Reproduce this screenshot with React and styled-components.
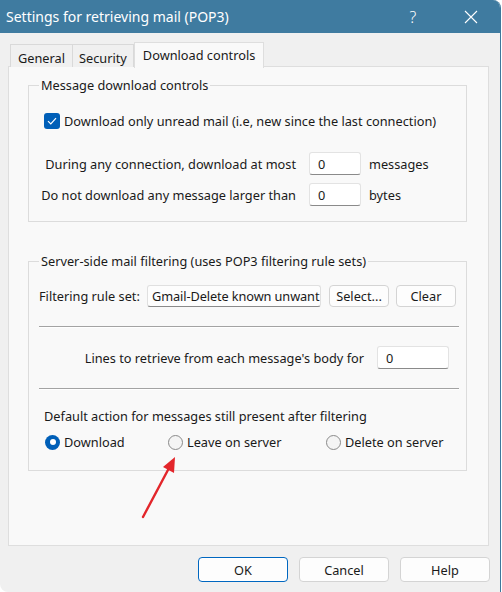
import React from 'react'
import styled, { createGlobalStyle } from 'styled-components'

const GlobalStyle = createGlobalStyle`
  html, body {
    margin: 0;
    padding: 0;
    background: #ffffff;
  }
  body {
    font-family: "Noto Sans", "Liberation Sans", sans-serif;
    font-size: 12.75px;
    color: #1a1a1a;
  }
`

const Window = styled.div`
  position: relative;
  width: 501px;
  height: 592px;
  box-sizing: border-box;
  border-right: 1px solid #3c789c;
  border-radius: 0 8px 0 8px;
  overflow: hidden;
  background: #f0f0f0;
  display: flex;
  flex-direction: column;
`

const TitleBar = styled.div`
  height: 33px;
  flex: none;
  background: #3f7ba0;
  color: #ffffff;
  display: flex;
  align-items: center;
  padding-left: 6px;
`

const Title = styled.span`
  flex: 1;
  font-size: 14px;
`

const TitleButton = styled.span`
  width: 58px;
  height: 33px;
  display: flex;
  align-items: center;
  justify-content: center;
  font-size: 16px;
  font-weight: 300;
`

const Body = styled.div`
  flex: 1;
  padding: 9px 0 0 8px;
  display: flex;
  flex-direction: column;
`

const TabStrip = styled.div`
  display: flex;
  align-items: flex-end;
  padding-left: 2px;
  height: 25px;
  margin-bottom: -1px;
  position: relative;
  z-index: 1;
`

const Tab = styled.div`
  height: ${p => (p.$active ? '26px' : '23px')};
  box-sizing: border-box;
  padding: ${p => (p.$active ? '3px 8px 0' : `4px ${p.$pad || 7}px 0`)};
  border: 1px solid ${p => (p.$active ? '#dedede' : '#d9d9d9')};
  border-bottom: none;
  border-left: ${p => (p.$first || p.$active ? '' : 'none')};
  background: ${p => (p.$active ? '#f9f9f9' : '#f0f0f0')};
  margin-bottom: ${p => (p.$active ? '-1px' : '0')};
  white-space: nowrap;
`

const Panel = styled.div`
  width: 481px;
  height: 480px;
  box-sizing: border-box;
  border: 1px solid #dedede;
  background: #f9f9f9;
  padding: 9px 0 0 19px;
`

const Group = styled.fieldset`
  width: 439px;
  box-sizing: border-box;
  margin: ${p => p.$top || 0}px 0 0;
  padding: 0 0 ${p => p.$bottom || 14}px 10px;
  border: 1px solid #dcdcdc;
  min-width: 0;
`

const Legend = styled.legend`
  padding: 0 2px;
  margin-left: 0;
  line-height: 18px;
`

const CheckRow = styled.label`
  display: flex;
  align-items: center;
  gap: 4px;
  margin: 19px 0 0 5px;
  line-height: 16px;
`

const CheckBox = styled.span`
  width: 16px;
  height: 16px;
  border-radius: 3px;
  background: #005fb8;
  display: flex;
  align-items: center;
  justify-content: center;
  flex: none;
`

const FieldGrid = styled.div`
  display: grid;
  grid-template-columns: 257px 52px auto;
  column-gap: 13px;
  row-gap: 8px;
  align-items: center;
  margin-top: 23px;
`

const FieldLabel = styled.span`
  text-align: right;
  white-space: nowrap;
`

const Unit = styled.span`
  margin-left: -5px;
`

const Input = styled.div`
  width: ${p => p.$width || 52}px;
  height: 23px;
  box-sizing: border-box;
  background: #ffffff;
  border: 1px solid #e3e3e3;
  border-bottom-color: #8a8a8a;
  border-radius: 3px;
  padding-left: 8px;
  display: flex;
  align-items: center;
`

const RuleRow = styled.div`
  display: flex;
  align-items: center;
  margin-top: 15px;
`

const RuleLabel = styled.span`
  width: 108px;
  white-space: nowrap;
`

const RuleField = styled.div`
  width: 174px;
  height: 22px;
  box-sizing: border-box;
  background: #fdfdfd;
  border: 1px solid #e0e0e0;
  border-bottom-color: #8a8a8a;
  border-radius: 3px;
  padding-left: 4px;
  display: flex;
  align-items: center;
  white-space: nowrap;
  letter-spacing: -0.1px;
`

const SmallButton = styled.div`
  width: 60px;
  height: 22px;
  box-sizing: border-box;
  margin-left: ${p => p.$gap || 8}px;
  background: #fdfdfd;
  border: 1px solid #d4d4d4;
  border-radius: 4px;
  display: flex;
  align-items: center;
  justify-content: center;
  white-space: nowrap;
`

const Separator = styled.div`
  width: 420px;
  height: 0;
  margin-top: ${p => p.$top}px;
  border-top: 1px solid #a3a3a3;
  border-bottom: 1px solid #ffffff;
`

const LinesRow = styled.div`
  display: flex;
  align-items: center;
  justify-content: flex-end;
  width: 410px;
  gap: 13px;
  margin-top: 18px;
`

const Caption = styled.div`
  margin: 17px 0 0 5px;
  line-height: 18px;
`

const RadioRow = styled.div`
  display: grid;
  grid-template-columns: 123px 158px auto;
  margin: 9px 0 0 6px;
`

const RadioItem = styled.label`
  display: flex;
  align-items: center;
  gap: 4px;
  line-height: 16px;
`

const RadioDot = styled.span`
  width: 15px;
  height: 15px;
  box-sizing: border-box;
  border-radius: 50%;
  flex: none;
  background: ${p => (p.$on ? '#005fb8' : '#f4f4f4')};
  border: ${p => (p.$on ? 'none' : '1px solid #8a8a8a')};
  display: flex;
  align-items: center;
  justify-content: center;

  &::after {
    content: '';
    display: ${p => (p.$on ? 'block' : 'none')};
    width: 6px;
    height: 6px;
    border-radius: 50%;
    background: #ffffff;
  }
`

const Footer = styled.div`
  display: flex;
  justify-content: flex-end;
  gap: 11px;
  padding: 11px 10px 0 0;
`

const DialogButton = styled.div`
  width: 90px;
  height: 25px;
  box-sizing: border-box;
  background: #fdfdfd;
  border: 1px solid ${p => (p.$focus ? '#0067c0' : '#d4d4d4')};
  box-shadow: ${p => (p.$focus ? 'inset 0 0 0 1px #ffffff' : 'none')};
  border-radius: 4px;
  display: flex;
  align-items: center;
  justify-content: center;
`

const Arrow = styled.svg`
  position: absolute;
  left: 0;
  top: 0;
  pointer-events: none;
`

const Check = () => (
  <svg width="10" height="8" viewBox="0 0 10 8">
    <path d="M1 4.2 L3.8 7 L9 1.2" fill="none" stroke="#ffffff" strokeWidth="1.2" />
  </svg>
)

const CloseIcon = () => (
  <svg width="14" height="14" viewBox="0 0 14 14">
    <path d="M1 1 L13 13 M13 1 L1 13" stroke="#ffffff" strokeWidth="1.1" />
  </svg>
)

const App = () => {
  return (
    <>
      <GlobalStyle />
      <Window>
        <TitleBar>
          <Title>Settings for retrieving mail (POP3)</Title>
          <TitleButton>?</TitleButton>
          <TitleButton><CloseIcon /></TitleButton>
        </TitleBar>

        <Body>
          <TabStrip>
            <Tab $first>General</Tab>
            <Tab $pad={6}>Security</Tab>
            <Tab $active>Download controls</Tab>
          </TabStrip>

          <Panel>
            <Group $bottom={15}>
              <Legend>Message download controls</Legend>
              <CheckRow>
                <CheckBox><Check /></CheckBox>
                Download only unread mail (i.e, new since the last connection)
              </CheckRow>
              <FieldGrid>
                <FieldLabel>During any connection, download at most</FieldLabel>
                <Input>0</Input>
                <Unit>messages</Unit>
                <FieldLabel>Do not download any message larger than</FieldLabel>
                <Input>0</Input>
                <Unit>bytes</Unit>
              </FieldGrid>
            </Group>

            <Group $top={30} $bottom={20}>
              <Legend>Server-side mail filtering (uses POP3 filtering rule sets)</Legend>
              <RuleRow>
                <RuleLabel>Filtering rule set:</RuleLabel>
                <RuleField>Gmail-Delete known unwant</RuleField>
                <SmallButton>Select...</SmallButton>
                <SmallButton $gap={7}>Clear</SmallButton>
              </RuleRow>
              <Separator $top={19} />
              <LinesRow>
                <span>Lines to retrieve from each message's body for</span>
                <Input $width={72}>0</Input>
              </LinesRow>
              <Separator $top={19} />
              <Caption>Default action for messages still present after filtering</Caption>
              <RadioRow>
                <RadioItem><RadioDot $on />Download</RadioItem>
                <RadioItem><RadioDot />Leave on server</RadioItem>
                <RadioItem><RadioDot />Delete on server</RadioItem>
              </RadioRow>
            </Group>
          </Panel>

          <Footer>
            <DialogButton $focus>OK</DialogButton>
            <DialogButton>Cancel</DialogButton>
            <DialogButton>Help</DialogButton>
          </Footer>
        </Body>

        <Arrow width="501" height="592">
          <line x1="143" y1="517" x2="169" y2="468" stroke="#e3262b" strokeWidth="2.4" strokeLinecap="round" />
          <polygon points="175,457 163,467 174,473" fill="#e3262b" />
        </Arrow>
      </Window>
    </>
  )
}

export default App
